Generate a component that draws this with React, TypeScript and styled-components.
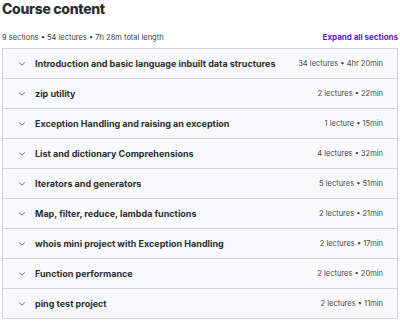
import styled, {createGlobalStyle} from 'styled-components';

const GlobalStyle = createGlobalStyle`
  body {
    margin: 0;
    background: #ffffff;
    font-family: Inter, "Noto Sans", sans-serif;
    color: #2d2f31;
  }
`;

const sections = [
  {title: 'Introduction and basic language inbuilt data structures', meta: '34 lectures • 4hr 20min'},
  {title: 'zip utility', meta: '2 lectures • 22min'},
  {title: 'Exception Handling and raising an exception', meta: '1 lecture • 15min'},
  {title: 'List and dictionary Comprehensions', meta: '4 lectures • 32min'},
  {title: 'Iterators and generators', meta: '5 lectures • 51min'},
  {title: 'Map, filter, reduce, lambda functions', meta: '2 lectures • 21min'},
  {title: 'whois mini project with Exception Handling', meta: '2 lectures • 17min'},
  {title: 'Function performance', meta: '2 lectures • 20min'},
  {title: 'ping test project', meta: '2 lectures • 11min'},
];

const Chevron = () => (
  <svg width="8" height="8" viewBox="0 0 8 8" fill="none">
    <path d="M1.5 2.8 L4 5.2 L6.5 2.8" stroke="#6a6f73" strokeWidth="1" strokeLinecap="round" />
  </svg>
);

const App = () => {
  return (
    <>
      <GlobalStyle />
      <StyledPage>
        <StyledH2>Course content</StyledH2>
        <StyledSummary>
          <span>9 sections • 54 lectures • 7h 28m total length</span>
          <StyledExpand>Expand all sections</StyledExpand>
        </StyledSummary>
        <StyledList>
          {sections.map((s) => (
            <StyledRow key={s.title}>
              <StyledIcon>
                <Chevron />
              </StyledIcon>
              <StyledTitle>{s.title}</StyledTitle>
              <StyledMeta>{s.meta}</StyledMeta>
            </StyledRow>
          ))}
        </StyledList>
      </StyledPage>
    </>
  );
};

export default App;

const StyledPage = styled.div`
  width: 396px;
  padding: 0 2px;
`;

const StyledH2 = styled.h2`
  margin: 0;
  font-size: 14px;
  line-height: 18px;
  font-weight: 800;
  letter-spacing: -0.3px;
`;

const StyledSummary = styled.div`
  display: flex;
  justify-content: space-between;
  align-items: center;
  margin-top: 13px;
  height: 12px;
  font-size: 7.5px;
  color: #3e4143;
`;

const StyledExpand = styled.button`
  border: none;
  background: none;
  padding: 0;
  font-family: inherit;
  font-size: 8px;
  font-weight: 700;
  color: #5624d0;
`;

const StyledList = styled.div`
  margin-top: 5px;
  border: 1px solid #d1d7dc;
  border-bottom: none;
`;

const StyledRow = styled.div`
  display: flex;
  align-items: center;
  height: 29px;
  padding: 0 14px;
  background: #f7f9fa;
  border-bottom: 1px solid #d1d7dc;
`;

const StyledIcon = styled.span`
  display: flex;
  width: 17px;
  margin-left: 1px;
`;

const StyledTitle = styled.span`
  flex: 1;
  font-size: 9px;
  font-weight: 700;
  color: #2d2f31;
`;

const StyledMeta = styled.span`
  font-size: 7.5px;
  color: #494c4f;
`;
